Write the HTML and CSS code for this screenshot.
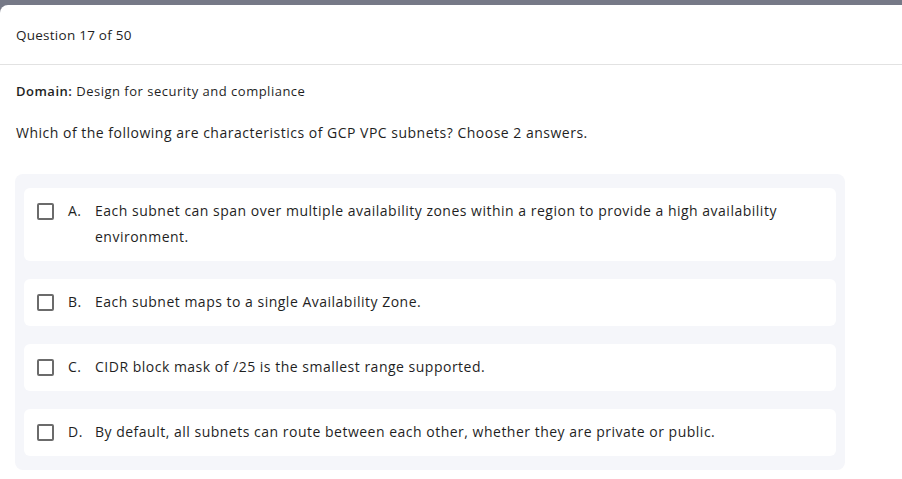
FILE: index.html
```html
<!DOCTYPE html>
<html lang="en">
<head>
<meta charset="utf-8">
<title>Question 17 of 50</title>
<link rel="stylesheet" href="styles.css">
</head>
<body>
<div class="card">
  <div class="card-header">Question 17 of 50</div>
  <div class="card-body">
    <p class="domain"><strong>Domain:</strong> Design for security and compliance</p>
    <p class="question">Which of the following are characteristics of GCP VPC subnets? Choose 2 answers.</p>
    <div class="options">
      <label class="option">
        <span class="checkbox"></span>
        <span class="letter">A.</span>
        <span class="text">Each subnet can span over multiple availability zones within a region to provide a high availability environment.</span>
      </label>
      <label class="option">
        <span class="checkbox"></span>
        <span class="letter">B.</span>
        <span class="text">Each subnet maps to a single Availability Zone.</span>
      </label>
      <label class="option">
        <span class="checkbox"></span>
        <span class="letter">C.</span>
        <span class="text">CIDR block mask of /25 is the smallest range supported.</span>
      </label>
      <label class="option">
        <span class="checkbox"></span>
        <span class="letter">D.</span>
        <span class="text">By default, all subnets can route between each other, whether they are private or public.</span>
      </label>
    </div>
  </div>
</div>
</body>
</html>
```
FILE: styles.css
```css
html, body {
  margin: 0;
  padding: 0;
}
body {
  background: #767987;
  font-family: "Open Sans", "Noto Sans", sans-serif;
  color: #1f1f1f;
  height: 479px;
  overflow: hidden;
  letter-spacing: 0.5px;
}
.card {
  margin-top: 5px;
  background: #ffffff;
  border-top-left-radius: 8px;
  height: 474px;
}
.card-header {
  height: 60px;
  box-sizing: border-box;
  padding-left: 16px;
  display: flex;
  align-items: center;
  font-size: 13.5px;
  letter-spacing: 0.25px;
  border-bottom: 1px solid #e2e2e2;
}
.card-body {
  padding: 0 15px;
}
.domain {
  margin: 16px 0 0 1px;
  font-size: 13px;
  line-height: 20px;
}
.domain strong {
  font-weight: 600;
}
.question {
  margin: 22px 0 0 1px;
  font-size: 14px;
  line-height: 20px;
}
.options {
  margin-top: 31px;
  width: 830px;
  box-sizing: border-box;
  background: #f5f6fa;
  border-radius: 8px;
  padding: 14px 9px;
  display: flex;
  flex-direction: column;
  gap: 18.5px;
}
.option {
  display: flex;
  align-items: flex-start;
  background: #ffffff;
  border-radius: 6px;
  padding: 10px 12px 10.5px 13px;
  font-size: 14px;
  line-height: 26px;
}
.checkbox {
  flex: none;
  width: 17px;
  height: 17px;
  box-sizing: border-box;
  border: 2px solid #6b6b6b;
  border-radius: 2px;
  margin-top: 5px;
  margin-right: 14px;
}
.letter {
  flex: none;
  width: 27px;
}
.text {
  flex: 1;
}
```
